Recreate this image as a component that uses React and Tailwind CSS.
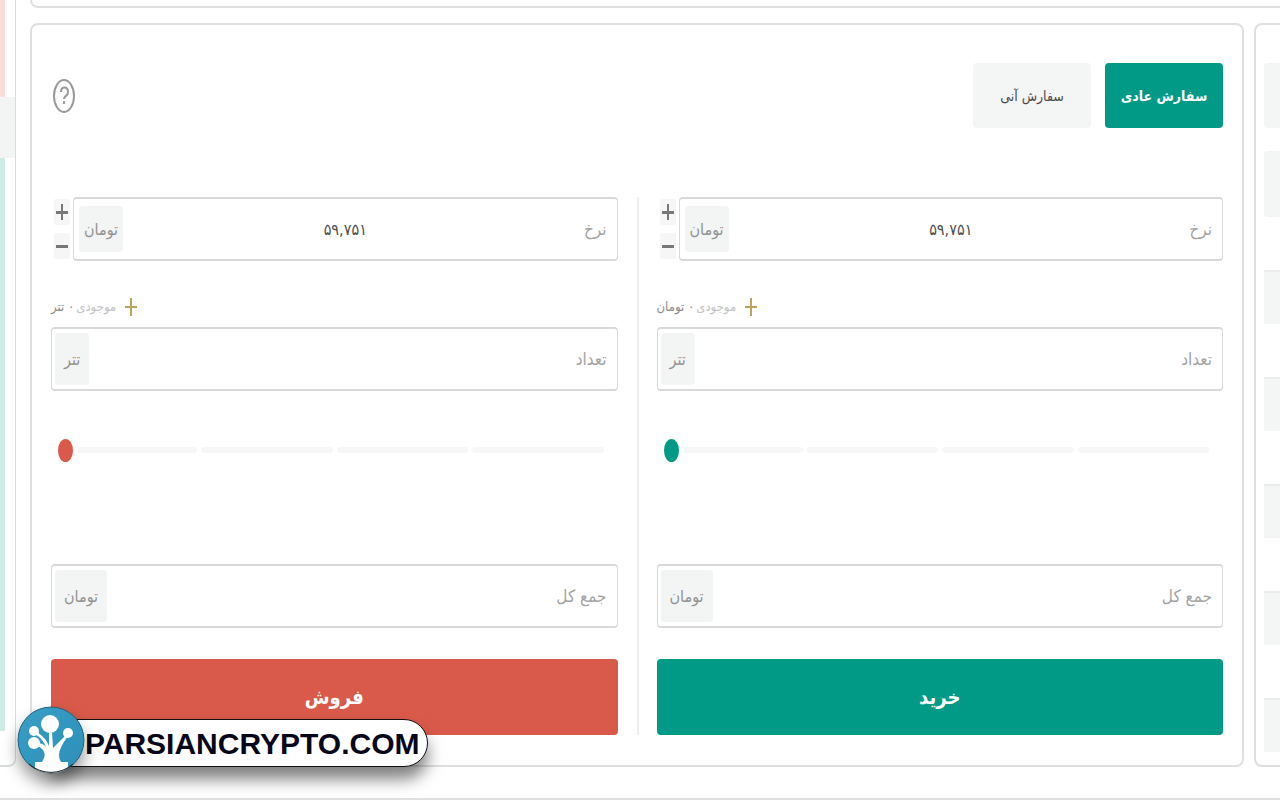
import { useState } from 'react';

const sides = [
  { id: 'buy', action: 'خرید', balanceUnit: 'تومان', button: 'bg-[#009a86]', thumb: '[&::-webkit-slider-thumb]:bg-[#009a86]' },
  { id: 'sell', action: 'فروش', balanceUnit: 'تتر', button: 'bg-[#d95a4a]', thumb: '[&::-webkit-slider-thumb]:bg-[#d95a4a]' },
];
const bookRows = [0, 1, 2, 3, 4, 5, 6, 7, 8, 9];

function toFa(n) { return n.toLocaleString('en-US').replace(/\d/g, d => '۰۱۲۳۴۵۶۷۸۹'[d]); }
function fromFa(s) { return Number(s.replace(/[۰-۹]/g, d => '۰۱۲۳۴۵۶۷۸۹'.indexOf(d)).replace(/\D/g, '')); }

function Field({ id, label, unit, value, onChange, centered }) {
  return (
    <div className="flex h-16 min-w-0 flex-1 items-center rounded-[4px] border-x border-y-2 border-[#d8d9d9] bg-white">
      <label htmlFor={id} className="w-[64px] shrink-0 pt-[2px] pr-[10px] text-[17px] whitespace-nowrap text-[#a3a3a3]">{label}</label>
      <input id={id} value={value} onChange={onChange}
        className="h-full min-w-0 flex-1 bg-transparent text-center text-[16px] text-[#4d4d4d] outline-none" />
      <div className={centered ? 'flex w-[64px] shrink-0 justify-end pl-[5px]' : 'flex shrink-0 justify-end pl-[3px]'}>
        <span className={`flex items-center rounded-[4px] bg-[#f3f4f4] pt-[2px] text-[16px] text-[#929292] ${centered ? 'h-[46px] px-[5px]' : 'h-[52px] px-[9px]'}`}>{unit}</span>
      </div>
    </div>
  );
}

function Steps({ id, thumb }) {
  const [percent, setPercent] = useState(0);
  return (
    <div dir="ltr" className="relative mt-[47px] flex h-6 items-center pr-[14px] pl-[15px]">
      <div className="grid flex-1 grid-cols-4 gap-1">
        {[1, 2, 3, 4].map(n => <span key={n} className="h-[6px] rounded-sm bg-[#f7f7f7]" />)}
      </div>
      <input type="range" min="0" max="100" aria-label={id} value={percent} onChange={e => setPercent(+e.target.value)}
        className={`absolute inset-x-[7px] h-6 appearance-none bg-transparent [&::-webkit-slider-thumb]:h-[23px] [&::-webkit-slider-thumb]:w-[15px] [&::-webkit-slider-thumb]:appearance-none [&::-webkit-slider-thumb]:rounded-[50%] [&::-webkit-slider-thumb]:shadow-[0_0_0_5px_white] ${thumb}`} />
    </div>
  );
}

function StepButton({ label, path, onClick }) {
  return (
    <button type="button" aria-label={label} onClick={onClick}
      className="flex h-[26px] w-4 items-center justify-center rounded-xs bg-[#f6f6f6]">
      <svg viewBox="0 0 12 18" className="h-[18px] w-3" fill="#777"><path d={path} /></svg>
    </button>
  );
}

function OrderForm({ side }) {
  const [rate, setRate] = useState(59751);
  const [amount, setAmount] = useState('');
  const [total, setTotal] = useState('');
  return (
    <form className="flex min-w-0 flex-1 flex-col" onSubmit={e => e.preventDefault()}>
      <div className="flex items-center gap-[3px]">
        <Field id={`${side.id}-rate`} label="نرخ" unit="تومان" centered value={toFa(rate)} onChange={e => setRate(fromFa(e.target.value))} />
        <div className="flex w-[19px] flex-col gap-2 pl-[3px]">
          <StepButton label="+" path="M5 1h2v7h5v3H7v6H5v-6H0V8h5z" onClick={() => setRate(rate + 1)} />
          <StepButton label="-" path="M0 8h12v3H0z" onClick={() => setRate(rate - 1)} />
        </div>
      </div>

      <div className="mt-[34px] flex h-6 items-center justify-end gap-[2px] text-[13px]">
        <svg viewBox="0 0 14 20" className="ml-[6px] h-5 w-[14px]" stroke="#bba45c" strokeWidth="2"><path d="M7 1v18M1 10h12" /></svg>
        <span className="text-[#c3c3c3]">موجودی</span>
        <span className="text-[#8a8a8a]">۰ {side.balanceUnit}</span>
      </div>
      <div className="mt-2 flex">
        <Field id={`${side.id}-amount`} label="تعداد" unit="تتر" value={amount} onChange={e => setAmount(e.target.value)} />
      </div>

      <Steps id={side.id} thumb={side.thumb} />

      <div className="mt-[102px] flex">
        <Field id={`${side.id}-total`} label="جمع کل" unit="تومان" value={total} onChange={e => setTotal(e.target.value)} />
      </div>
      <button className={`mt-[31px] h-[76px] rounded-[4px] text-[20px] font-bold text-white ${side.button}`}>{side.action}</button>
    </form>
  );
}

function Watermark() {
  return (
    <div className="absolute top-[706px] left-[17px] flex items-end">
      <svg viewBox="0 0 68 68" className="z-10 h-[68px] w-[68px] rounded-full drop-shadow-[0_10px_8px_rgba(0,0,0,0.4)]">
        <defs>
          <clipPath id="disc"><circle cx="34" cy="34" r="33" /></clipPath>
          <linearGradient id="blue" x1="0" y1="0" x2="1" y2="1"><stop offset="0" stopColor="#389fc6" /><stop offset="1" stopColor="#2c8fb8" /></linearGradient>
        </defs>
        <circle cx="34" cy="34" r="33" fill="url(#blue)" stroke="#245f78" strokeWidth="1" />
        <g clipPath="url(#disc)">
          <g fill="#fff">
            <circle cx="33" cy="18" r="9" />
            <circle cx="17" cy="25" r="5" />
            <circle cx="51" cy="27" r="5" />
            <circle cx="17" cy="37" r="6" />
            <path d="M32 26h3l1 16 13-13 2 1q-9 12-9 19 0 4 2 7h7v14H18V56h7q4-6 2-10-2-5-8-6l1-3q6 0 9 4-3-8-11-13l2-2q9 6 12 14z" />
          </g>
        </g>
        <path d="M12 58a33 33 0 0 0 44 0" fill="none" stroke="#222" strokeWidth="1" />
      </svg>
      <div className="mb-[7px] -ml-[34px] flex h-12 items-center rounded-r-full border border-[#111] bg-white pt-[2px] pr-2 pl-[33px] text-[30px] leading-none font-bold text-[#06061a] shadow-[0_12px_16px_rgba(0,0,0,0.5)] [font-family:'Liberation_Sans',Arial,sans-serif]">
        PARSIANCRYPTO.COM
      </div>
    </div>
  );
}

export default function App() {
  const [tab, setTab] = useState('normal');
  const tabClass = on => `h-[65px] w-[118px] rounded-[4px] pt-[2px] text-[14px] whitespace-nowrap ${on ? 'bg-[#009a86] font-bold text-white' : 'bg-[#f4f5f5] text-[#4a4a4a]'}`;
  return (
    <div className="relative min-h-screen overflow-hidden bg-white [font-family:'DejaVu_Sans_Condensed','DejaVu_Sans',sans-serif]">
      <div className="flex">
        <aside className="flex w-4 shrink-0 flex-col overflow-hidden rounded-br-lg border-r border-b-2 border-[#d9dcdc]">
          <div className="h-[97px] w-[5px] bg-[#fbdcda]" />
          <div className="h-[61px] bg-[#f3f4f4]" />
          <div className="mb-[34px] w-[5px] flex-1 bg-[#cdeae5]" />
        </aside>

        <div className="ml-[14px] min-w-0 flex-1">
          <div className="h-2 rounded-bl-lg border-b-2 border-l-2 border-[#dfe0e0]" />
          <div className="mt-[15px] flex gap-[10px]">
            <main dir="rtl" className="min-w-0 flex-1 rounded-lg border-2 border-[#dfe0e0] px-[19px] pt-[38px] pb-[30px]">
              <div className="flex items-center gap-[14px]">
                <button onClick={() => setTab('normal')} className={tabClass(tab === 'normal')}>سفارش عادی</button>
                <button onClick={() => setTab('instant')} className={tabClass(tab === 'instant')}>سفارش آنی</button>
                <button aria-label="؟" className="mr-auto">
                  <svg viewBox="0 0 26 36" className="h-9 w-[26px]" fill="none" stroke="#999">
                    <ellipse cx="13" cy="18" rx="10" ry="16" strokeWidth="2" />
                    <path d="M10 14c0-6 7-6 7 0 0 4-4 4-4 7" strokeWidth="2" />
                    <path d="M13 23v3" strokeWidth="2" />
                  </svg>
                </button>
              </div>

              <div className="mt-[69px] flex">
                <OrderForm side={sides[0]} />
                <div className="mr-[18px] ml-[19px] w-[2px] bg-[#efefef]" />
                <OrderForm side={sides[1]} />
              </div>
            </main>

            <section className="w-[26px] shrink-0 rounded-l-lg border-2 border-r-0 border-[#dfe0e0] pt-[38px] pl-2">
              <div className="h-[65px] rounded-l-[4px] bg-[#f4f5f5]" />
              <div className="mt-[23px] h-[66px] rounded-l-[4px] bg-[#f4f5f5]" />
              {bookRows.map(i => <div key={i} className={i % 2 ? 'h-[54px] border-t-2 border-[#ebecec] bg-[#f4f5f5]' : 'h-[53px]'} />)}
            </section>
          </div>
        </div>
      </div>
      <div className="mt-[31px] h-[2px] bg-[#dfe0e0]" />
      <Watermark />
    </div>
  );
}
